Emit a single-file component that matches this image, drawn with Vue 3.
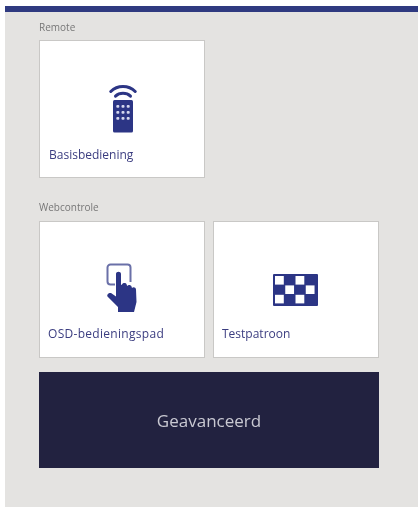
<script setup>
const cells = []
for (let r = 0; r < 3; r++) {
  for (let c = 0; c < 4; c++) {
    if ((r + c) % 2 === 0) cells.push({ x: 2 + c * 10.25, y: 2 + r * 9.4 })
  }
}
</script>

<template>
  <div class="page">
    <main class="panel">
      <div class="bar"></div>
      <section class="remote">
        <h2 class="label">Remote</h2>
        <div class="grid">
          <button class="card">
            <span class="icon icon-remote">
              <svg width="28" height="50" viewBox="0 0 28 50">
                <path d="M1.800 8.500C8.500 1.800 19.500 1.800 26.200 8.500" fill="none" stroke="#2c3585" stroke-width="3" stroke-linecap="round" />
                <path d="M6.500 13.200C10.500 9.400 17.500 9.400 21.500 13.200" fill="none" stroke="#2c3585" stroke-width="3" stroke-linecap="round" />
                <rect x="4" y="17" width="20" height="32.500" rx="1.500" fill="#2c3585" />
                <g fill="#d5d8ee">
                  <rect x="7.300" y="22" width="3" height="2.800" rx="1" /><rect x="12.500" y="22" width="3" height="2.800" rx="1" /><rect x="17.700" y="22" width="3" height="2.800" rx="1" />
                  <rect x="7.300" y="28" width="3" height="2.800" rx="1" /><rect x="12.500" y="28" width="3" height="2.800" rx="1" /><rect x="17.700" y="28" width="3" height="2.800" rx="1" />
                  <rect x="7.300" y="34" width="3" height="2.800" rx="1" /><rect x="12.500" y="34" width="3" height="2.800" rx="1" /><rect x="17.700" y="34" width="3" height="2.800" rx="1" />
                </g>
              </svg>
            </span>
            <span class="title">Basisbediening</span>
          </button>
        </div>
      </section>
      <section class="web">
        <h2 class="label">Webcontrole</h2>
        <div class="grid">
          <button class="card">
            <span class="icon icon-hand">
              <svg width="32" height="50" viewBox="0 0 32 50">
                <path d="M9 21.500H4.500A3 3 0 0 1 1.500 18.500V4.500A3 3 0 0 1 4.500 1.500H21.500A3 3 0 0 1 24.500 4.500V19" fill="none" stroke="#6a70a8" stroke-width="2" />
                <path d="M10 11C10 8 15 8 15 11V22L16 21.500C17 19.500 20.500 19.500 20.800 22L21.200 23C22 21.500 25 21.800 25.500 23.500L26 25C27 23.500 29.800 24 30 26.500L30.500 39L28 49H12V44L1.500 33.500C0.500 32 2.500 29.500 5 30L10 33.500Z" fill="#2c3585" />
              </svg>
            </span>
            <span class="title title-wide">OSD-bedieningspad</span>
          </button>
          <button class="card">
            <span class="icon icon-check">
              <svg width="45" height="32" viewBox="0 0 45 32">
                <rect width="45" height="32" rx="1" fill="#2c3585" />
                <rect v-for="(cell, i) in cells" :key="i" :x="cell.x" :y="cell.y" width="8.800" height="8.600" fill="#fff" />
              </svg>
            </span>
            <span class="title title-tight">Testpatroon</span>
          </button>
          <button class="advanced">Geavanceerd</button>
        </div>
      </section>
    </main>
  </div>
</template>

<style>
html, body { margin: 0; background: #fff; }
</style>

<style scoped>
.page {
  width: 418px;
  height: 507px;
  padding: 6px 0 0 5px;
  box-sizing: border-box;
  overflow: hidden;
  font-family: "Open Sans", "Noto Sans", sans-serif;
  filter: blur(0.45px);
}
.panel {
  height: 501px;
  background: #e4e3e1;
  display: flex;
  flex-direction: column;
}
.bar {
  height: 6px;
  background: #2f3a80;
}
.remote { padding: 9px 0 0 34px; }
.web { padding: 23px 0 0 34px; }
.label {
  margin: 0 0 6px;
  font-size: 10px;
  line-height: 13px;
  font-weight: 400;
  color: #777;
}
.web .label { margin-bottom: 7px; }
.grid {
  display: grid;
  grid-template-columns: 166px 166px;
  column-gap: 8px;
  row-gap: 14px;
  width: 340px;
}
.card {
  height: 138px;
  padding: 0;
  box-sizing: border-box;
  background: #fff;
  border: 1px solid #c9c8c6;
  display: flex;
  flex-direction: column;
  font-family: inherit;
}
.web .card { height: 137px; }
.icon {
  display: flex;
  justify-content: center;
  box-sizing: border-box;
  width: 100%;
  height: 106px;
  padding-top: 42px;
}
.icon svg { display: block; }
.icon-remote { padding-left: 1px; }
.web .icon { height: 104px; }
.icon-hand { padding-top: 41px; }
.icon-check { padding-top: 52px; padding-right: 1px; }
.title {
  padding-left: 9px;
  font-size: 12px;
  line-height: 16px;
  color: #3b3d80;
  text-align: left;
}
.title-wide { padding-left: 8px; letter-spacing: 0.3px; }
.title-tight { padding-left: 8px; }
.advanced {
  grid-column: 1 / 3;
  height: 96px;
  border: 0;
  background: #222240;
  color: #c9c9d2;
  font-family: inherit;
  font-size: 17px;
}
</style>
